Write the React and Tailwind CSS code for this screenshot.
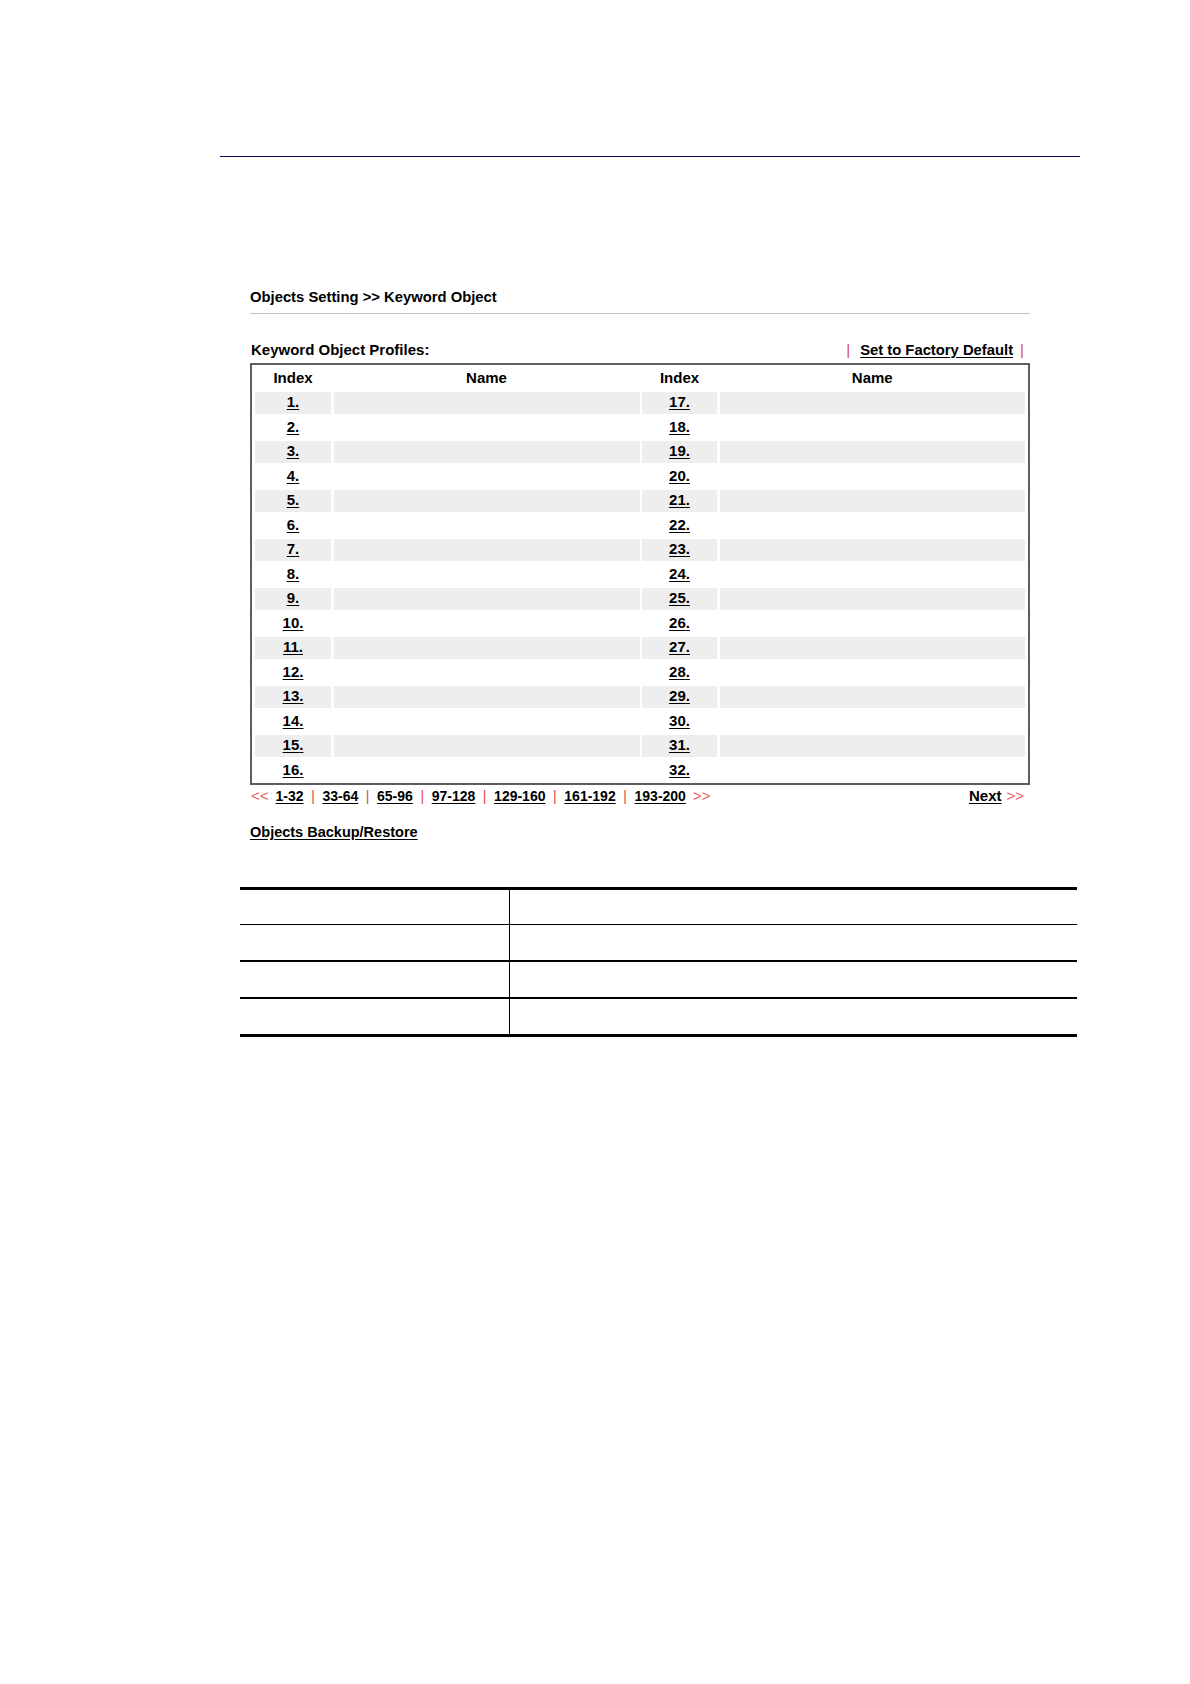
const left = Array.from({ length: 16 }, (_, i) => i + 1);

const pages = ['1-32', '33-64', '65-96', '97-128', '129-160', '161-192', '193-200'];

function Pipe({ pad = 'px-[6px]' }) {
  return <span className={`text-[#e04848] font-normal ${pad}`}>|</span>;
}

export default function App() {
  return (
    <div
      className="relative w-[1190px] h-[1684px] bg-white text-black"
      style={{ fontFamily: '"Liberation Sans", Arial, sans-serif' }}
    >
      {/* top rule */}
      <div className="pt-[156px]">
        <div className="ml-[220px] w-[860px] h-px bg-[#120652]"></div>
      </div>

      {/* web ui capture */}
      <div className="ml-[250px] w-[780px]">
        <div className="mt-[130px] text-[14.8px] font-bold leading-[20px]">
          Objects Setting &gt;&gt; Keyword Object
        </div>
        <div className="mt-[6px] h-px bg-[#c4c4c4]"></div>

        <div className="mt-[26px] flex items-center justify-between text-[15px] font-bold leading-[20px]">
          <span className="pl-[1px]">Keyword Object Profiles:</span>
          <span className="pr-[2px] flex items-center">
            <Pipe pad="pl-[6px] pr-[10px]" />
            <a className="underline underline-offset-2 text-[14.8px]">Set to Factory Default</a>
            <Pipe pad="pl-[7px] pr-[4px]" />
          </span>
        </div>

        <div className="mt-[3px] border-2 border-[#5e5e5e] px-[3px] pt-[2px] pb-[2px]">
          <div className="grid grid-cols-[76px_306px_75px_1fr] gap-x-[2.5px] gap-y-[2.5px] text-[15px] font-bold">
            <div className="h-[22px] flex items-center justify-center">Index</div>
            <div className="h-[22px] flex items-center justify-center">Name</div>
            <div className="h-[22px] flex items-center justify-center">Index</div>
            <div className="h-[22px] flex items-center justify-center">Name</div>
            {left.map((n) => {
              const bg = n % 2 === 1 ? 'bg-[#eeeeee]' : 'bg-white';
              return [
                <div key={'a' + n} className={`h-[22px] flex items-center justify-center ${bg}`}>
                  <a className="underline underline-offset-2">{n}.</a>
                </div>,
                <div key={'b' + n} className={`h-[22px] ${bg}`}></div>,
                <div key={'c' + n} className={`h-[22px] flex items-center justify-center ${bg}`}>
                  <a className="underline underline-offset-2">{n + 16}.</a>
                </div>,
                <div key={'d' + n} className={`h-[22px] ${bg}`}></div>,
              ];
            })}
          </div>
        </div>

        <div className="mt-[1px] flex items-center justify-between leading-[20px] font-bold">
          <div className="flex items-center text-[14px]">
            <span className="text-[#e85a5a] font-normal text-[15px] pl-[1px] pr-[7px]">&lt;&lt;</span>
            {pages.map((p, i) => (
              <span key={p} className="flex items-center">
                {i > 0 && <Pipe pad="px-[7.6px]" />}
                <a className="underline underline-offset-2">{p}</a>
              </span>
            ))}
            <span className="text-[#e85a5a] font-normal text-[15px] pl-[7px]">&gt;&gt;</span>
          </div>
          <div className="flex items-center pr-[6px]">
            <a className="underline underline-offset-2 text-[15px]">Next</a>
            <span className="text-[#e85a5a] font-normal text-[15px] pl-[5px]">&gt;&gt;</span>
          </div>
        </div>

        <div className="mt-[16px] text-[14.5px] font-bold leading-[20px]">
          <a className="underline underline-offset-2">Objects Backup/Restore</a>
        </div>
      </div>

      {/* description table (empty) */}
      <div className="ml-[240px] mt-[45px] w-[837px] border-t-[3px] border-b-[3px] border-black">
        <div className="grid grid-cols-[270px_1fr] h-[35px] border-b border-black">
          <div className="border-r border-black"></div>
          <div></div>
        </div>
        <div className="grid grid-cols-[270px_1fr] h-[37px] border-b-2 border-black">
          <div className="border-r border-black"></div>
          <div></div>
        </div>
        <div className="grid grid-cols-[270px_1fr] h-[37px] border-b-2 border-black">
          <div className="border-r border-black"></div>
          <div></div>
        </div>
        <div className="grid grid-cols-[270px_1fr] h-[35px]">
          <div className="border-r border-black"></div>
          <div></div>
        </div>
      </div>
    </div>
  );
}
